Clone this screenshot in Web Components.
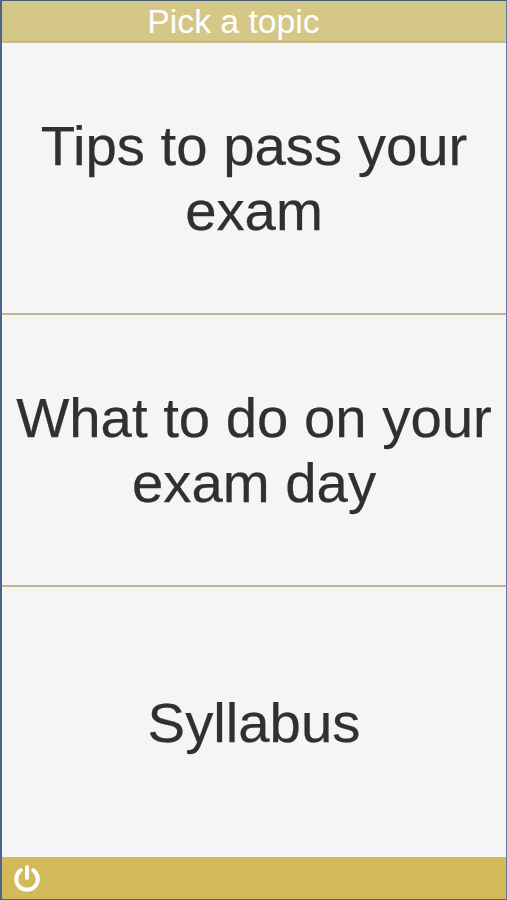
<!DOCTYPE html>
<html lang="en"><head><meta charset="utf-8"><title>Pick a topic</title>
<style>html,body{margin:0;height:100%}</style></head><body>
<topic-screen><topic-header slot="header">Pick a topic</topic-header>
<topic-card>Tips to pass your exam</topic-card><topic-card>What to do on your exam day</topic-card><topic-card>Syllabus</topic-card>
<topic-footer slot="footer"></topic-footer></topic-screen>
<script>
const define=(name,html)=>customElements.define(name,class extends HTMLElement{constructor(){super();this.attachShadow({mode:"open"}).innerHTML=html;}});
define("topic-screen",`<style>:host{display:flex;flex-direction:column;box-sizing:border-box;width:507px;height:900px;border:1px solid #4d6275;border-top-color:#4a6078;border-left:2px solid #4d658c;border-right-color:#647697;background:#f5f5f5;font-family:"Liberation Sans",Arial,sans-serif}main{flex:1;display:grid;grid-template-rows:272px 272px 1fr;min-height:0}</style><slot name="header"></slot><main><slot></slot></main><slot name="footer"></slot>`);
define("topic-header",`<style>:host{display:flex;justify-content:center;box-sizing:border-box;height:42px;padding-right:41px;border-bottom:2px solid #c6bb88;background:#d5c788;color:#fff;font-size:33.7px;line-height:41px;white-space:nowrap}</style><slot></slot>`);
define("topic-card",`<style>:host{display:flex;align-items:center;justify-content:center;box-sizing:border-box;border-bottom:2px solid #bdb88f;color:#303030;font-size:56.3px;line-height:65px;text-align:center;-webkit-text-stroke:.25px #303030}:host(:last-of-type){border-bottom:0}</style><span><slot></slot></span>`);
define("topic-footer",`<style>:host{display:flex;align-items:center;box-sizing:border-box;height:42px;padding-left:11px;background:#d2ba5a}svg{display:block}</style><svg width="28" height="28" viewBox="0 0 28 28" fill="none" stroke="#fff" stroke-width="4" stroke-linecap="round"><path d="M7.8 6.2A10.8 10.8 0 1 0 20.2 6.2M14 3V14"/></svg>`);
</script></body></html>
